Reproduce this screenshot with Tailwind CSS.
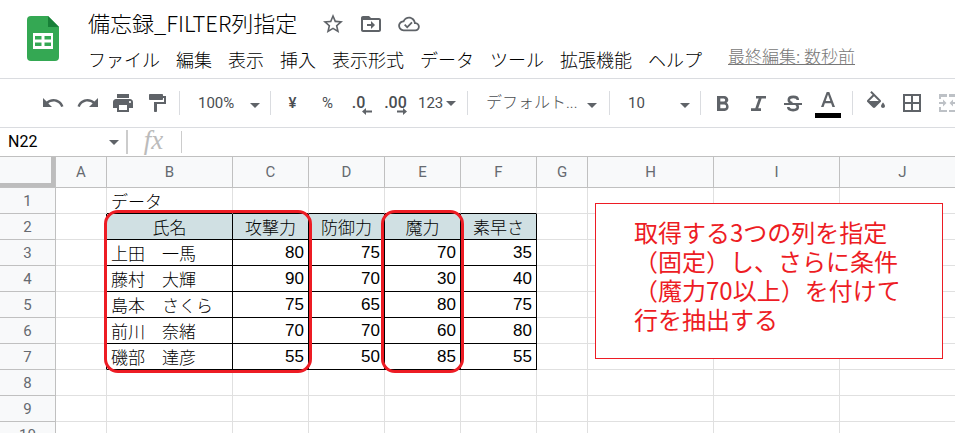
<!DOCTYPE html>
<html lang="ja">
<head>
<meta charset="utf-8">
<title>備忘録_FILTER列指定</title>
<script src="https://cdn.jsdelivr.net/npm/@tailwindcss/browser@4"></script>
</head>
<body class="flex h-screen flex-col overflow-hidden bg-white font-['Roboto','Noto_Sans_CJK_JP',sans-serif] text-black">
<header class="flex h-[79px] shrink-0 border-b border-[#dadce0] pl-[26px]">
  <svg class="mt-4 h-[45px] w-[34px] shrink-0" viewBox="0 0 34 45" aria-label="スプレッドシート"><path fill="#34a853" d="M5 0h17l11 11v30a4 4 0 0 1-4 4H5a4 4 0 0 1-4-4V4a4 4 0 0 1 4-4z"/><path fill="#188038" d="M22 0l11 11H22z"/><path fill="#fff" fill-rule="evenodd" d="M7 17h20v16H7zM9 20v3.500h6.500V20zM18.500 20v3.500H25V20zM9 26.500V30h6.500v-3.500zM18.500 26.500V30H25v-3.500z"/></svg>
  <div class="ml-7 flex flex-col pt-2">
    <div class="flex h-8 items-center">
      <h1 class="text-[22px] leading-7 pb-1 font-light font-['Noto_Sans_CJK_JP',sans-serif] whitespace-nowrap">備忘録_FILTER列指定</h1>
      <div class="ml-6 flex gap-[14px] text-[#5f6368]">
        <button aria-label="スター"><svg class="size-6" viewBox="0 0 24 24" fill="currentColor"><path d="M22 9.240l-7.190-.62L12 2 9.190 8.630 2 9.240l5.460 4.730L5.820 21 12 17.270 18.180 21l-1.630-7.030L22 9.240zM12 15.400l-3.760 2.270 1-4.280-3.320-2.880 4.380-.38L12 6.100l1.710 4.040 4.380.38-3.320 2.880 1 4.280L12 15.400z"/></svg></button>
        <button aria-label="移動"><svg class="size-6" viewBox="0 0 24 24" fill="currentColor"><path d="M20 6h-8l-2-2H4c-1.100 0-2 .9-2 2v12c0 1.100.9 2 2 2h16c1.100 0 2-.9 2-2V8c0-1.100-.9-2-2-2zm0 12H4V8h16v10zm-8-1l4-4-4-4v3H8v2h4z"/></svg></button>
        <button aria-label="保存済み"><svg class="size-6" viewBox="0 0 24 24" fill="currentColor"><path d="M19.350 10.040C18.670 6.590 15.640 4 12 4 9.110 4 6.600 5.640 5.350 8.040 2.340 8.360 0 10.910 0 14c0 3.310 2.690 6 6 6h13c2.760 0 5-2.240 5-5 0-2.640-2.050-4.780-4.650-4.960zM19 18H6c-2.210 0-4-1.790-4-4 0-2.050 1.530-3.760 3.560-3.970l1.070-.11.5-.95C8.080 7.140 9.940 6 12 6c2.620 0 4.880 1.860 5.390 4.430l.3 1.500 1.530.11c1.560.1 2.780 1.410 2.780 2.960 0 1.650-1.350 3-3 3zm-9-3.820l-2.090-2.090L6.500 13.500 10 17l6.010-6.010-1.410-1.410z" transform="translate(1.200 1.200) scale(.9)"/></svg></button>
      </div>
    </div>
    <nav class="flex h-10 items-center gap-4 text-[18px] font-light whitespace-nowrap font-['Noto_Sans_CJK_JP',sans-serif]">
      <button>ファイル</button><button>編集</button><button>表示</button><button>挿入</button><button>表示形式</button><button>データ</button><button>ツール</button><button>拡張機能</button><button>ヘルプ</button>
      <a href="#" class="mb-1.5 ml-2.5 text-[17px] text-[#777] underline">最終編集: 数秒前</a>
    </nav>
  </div>
</header>

<div class="flex h-[49px] shrink-0 items-center border-b border-[#dadce0] pl-[35px] text-[15px] text-[#4a4d51] *:shrink-0" role="toolbar">
  <button aria-label="元に戻す" class="flex w-[35px] justify-center"><svg class="size-6" viewBox="0 0 24 24" fill="#5f6368"><path d="M12.500 8c-2.650 0-5.050.99-6.900 2.600L2 7v9h9l-3.620-3.620c1.390-1.160 3.160-1.880 5.120-1.880 3.540 0 6.550 2.310 7.600 5.500l2.370-.78C21.080 11.030 17.150 8 12.500 8z"/></svg></button>
  <button aria-label="やり直し" class="flex w-[35px] justify-center"><svg class="size-6" viewBox="0 0 24 24" fill="#5f6368"><path d="M18.400 10.600C16.550 8.990 14.150 8 11.500 8c-4.650 0-8.580 3.030-9.960 7.220L3.900 16c1.050-3.190 4.050-5.500 7.600-5.500 1.950 0 3.730.72 5.120 1.880L13 16h9V7l-3.600 3.600z"/></svg></button>
  <button aria-label="印刷" class="flex w-[35px] justify-center"><svg class="size-6" viewBox="0 0 24 24" fill="#5f6368"><path d="M19 8H5c-1.660 0-3 1.340-3 3v6h4v4h12v-4h4v-6c0-1.660-1.340-3-3-3zm-3 11H8v-5h8v5zm3-7c-.55 0-1-.45-1-1s.45-1 1-1 1 .45 1 1-.45 1-1 1zM18 3H6v4h12V3z"/></svg></button>
  <button aria-label="書式を貼り付け" class="flex w-[35px] justify-center"><svg class="size-6" viewBox="0 0 24 24" fill="#5f6368"><path d="M18 4V3c0-.55-.45-1-1-1H5c-.55 0-1 .45-1 1v4c0 .55.45 1 1 1h12c.55 0 1-.45 1-1V6h1v4H9v9c0 .55.45 1 1 1h1c.55 0 1-.45 1-1v-7h9V4h-3z" transform="translate(-1 1)"/></svg></button>
  <div class="ml-1 h-6 w-px bg-[#dadce0]"></div>
  <div class="relative w-[90px]">
    <select aria-label="ズーム" class="w-full appearance-none bg-transparent pl-[18px]"><option>100%</option></select>
    <svg class="pointer-events-none absolute top-1/2 right-[10px] h-[5px] w-[10px]" viewBox="0 0 10 5" fill="#5f6368"><path d="M0 0h10L5 5z"/></svg>
  </div>
  <div class="h-6 w-px bg-[#dadce0]"></div>
  <button class="ml-1 w-[35px] font-medium">¥</button>
  <button class="w-[35px]">%</button>
  <button aria-label="小数点以下の桁数を減らす" class="relative w-[35px] pr-2 text-[16px] font-medium">.0<svg class="absolute right-2 bottom-0 h-[7px] w-[10px]" viewBox="0 0 10 7" fill="#5f6368"><path d="M0 3.500L4 0v2.500h6v2H4V7z"/></svg></button>
  <button aria-label="小数点以下の桁数を増やす" class="relative w-[35px] pr-1 text-[16px] font-medium">.00<svg class="absolute right-2 bottom-0 h-[7px] w-[10px]" viewBox="0 0 10 7" fill="#5f6368"><path d="M10 3.500L6 0v2.500H0v2h6V7z"/></svg></button>
  <button class="flex w-12 items-center gap-[3px] pl-[3px]">123<svg class="h-[5px] w-[10px]" viewBox="0 0 10 5" fill="#5f6368"><path d="M0 0h10L5 5z"/></svg></button>
  <div class="ml-1 h-6 w-px bg-[#dadce0]"></div>
  <div class="relative w-[141px]">
    <select aria-label="フォント" class="w-full appearance-none bg-transparent pl-[18px] text-[16px] font-light"><option>デフォルト...</option></select>
    <svg class="pointer-events-none absolute top-1/2 right-3 h-[5px] w-[10px]" viewBox="0 0 10 5" fill="#5f6368"><path d="M0 0h10L5 5z"/></svg>
  </div>
  <div class="h-6 w-px bg-[#dadce0]"></div>
  <div class="relative w-[90px]">
    <select aria-label="フォントサイズ" class="w-full appearance-none bg-transparent pl-[18px]"><option>10</option></select>
    <svg class="pointer-events-none absolute top-1/2 right-[10px] h-[5px] w-[10px]" viewBox="0 0 10 5" fill="#5f6368"><path d="M0 0h10L5 5z"/></svg>
  </div>
  <div class="h-6 w-px bg-[#dadce0]"></div>
  <button aria-label="太字" class="ml-1 flex w-[35px] justify-center"><svg class="size-6" viewBox="0 0 24 24" fill="#5f6368"><path d="M15.600 11.800c1-.7 1.700-1.800 1.700-2.800 0-2.300-1.800-4-4.100-4H6v15h7.800c2.100 0 3.800-1.700 3.800-3.900 0-1.900-.8-3.500-2-4.300zM9.300 7.600h3.400a1.500 1.500 0 0 1 0 3H9.300zm4 9.700h-4v-3.700h4a1.700 1.700 0 0 1 0 3.700z"/></svg></button>
  <button aria-label="斜体" class="flex w-[35px] justify-center"><svg class="size-6" viewBox="0 0 24 24" fill="#5f6368"><path d="M10 5v2.600h2.700L9.300 17.200H5V20h10v-2.800h-2.800l3.400-9.600H20V5z"/></svg></button>
  <button aria-label="取り消し線" class="flex w-[35px] justify-center"><svg class="size-6" viewBox="0 0 24 24" fill="none" stroke="#5f6368"><path stroke-width="2" d="M3 13h18"/><path stroke-width="2.600" d="M16.800 9c0-2-1.800-3.100-4.500-3.100S7.800 7.200 7.800 9c0 1.800 1.500 2.700 3.500 3.300M7.300 16c0 2 1.900 3.100 4.800 3.100 2.800 0 4.700-1.200 4.700-3.100 0-1.200-.6-2-1.600-2.600"/></svg></button>
  <button aria-label="テキストの色" class="flex w-[35px] justify-center"><svg class="h-[30px] w-[26px]" viewBox="0 0 26 30"><path fill="#5f6368" fill-rule="evenodd" d="M11.700 4h2.600L20 19h-2.600l-1.300-3.700H9.900L8.600 19H6zM10.700 13h4.600L13 6.600z"/><path d="M0 25h26v5H0z"/></svg></button>
  <div class="ml-[7px] h-6 w-px bg-[#dadce0]"></div>
  <button aria-label="塗りつぶしの色" class="ml-[5px] flex w-9 justify-center"><svg class="size-6" viewBox="0 0 24 24" fill="#5f6368"><path d="M16.560 8.940L7.620 0 6.210 1.410l2.380 2.380-5.150 5.150c-.59.59-.59 1.540 0 2.120l5.500 5.500c.29.290.68.440 1.060.44s.77-.15 1.060-.44l5.500-5.500c.59-.58.59-1.530 0-2.120zM5.210 10L10 5.210 14.790 10zM19 11.500s-2 2.170-2 3.500c0 1.100.9 2 2 2s2-.9 2-2c0-1.330-2-3.500-2-3.500z"/></svg></button>
  <button aria-label="枠線" class="flex w-9 justify-center"><svg class="size-6" viewBox="0 0 24 24" fill="#5f6368" fill-rule="evenodd"><path d="M3 3v18h18V3zm8 16H5v-6h6zm0-8H5V5h6zm8 8h-6v-6h6zm0-8h-6V5h6z"/></svg></button>
  <button aria-label="セルを結合" disabled class="flex w-9 justify-center"><svg class="size-6" viewBox="0 0 24 24" fill="#bdc1c6"><path d="M3 3h8v3H5v2H3zM13 3h8v5h-2V6h-6zM3 16h2v3h6v2H3zM19 16h2v5h-8v-2h6zM3 11h4V8.500l3.500 3.500L7 15.500V13H3zM21 11h-4V8.500L13.500 12l3.500 3.500V13h4z"/></svg></button>
</div>

<div class="flex h-[29px] shrink-0 items-center border-b border-[#c0c0c0]">
  <div class="flex w-[126px] items-center pl-2">
    <input aria-label="名前ボックス" value="N22" class="w-[101px] text-[16px] outline-none">
    <svg class="h-[5px] w-[10px]" viewBox="0 0 10 5" fill="#5f6368"><path d="M0 0h10L5 5z"/></svg>
  </div>
  <div class="h-6 w-0.5 bg-[#ccc]"></div>
  <label for="fx" class="w-[53px] pr-0.5 pb-1 text-center font-['Liberation_Serif',serif] text-[27px] leading-6 text-[#bbb] italic">fx</label>
  <input id="fx" class="h-[22px] min-w-0 flex-1 border-l border-[#ccc] pl-2 outline-none">
</div>

<main class="relative flex-1 overflow-hidden">
  <table class="w-[966px] table-fixed border-separate border-spacing-0 font-['Liberation_Sans','Noto_Sans_CJK_JP',sans-serif] text-[17px] leading-6 whitespace-nowrap [&_td]:h-[26px] [&_td]:border-r [&_td]:border-b [&_td]:border-[#e0e0e0] [&_td]:px-1 [&_td]:pt-px [&_td]:pb-0 [&_td]:font-['Noto_Sans_CJK_JP',sans-serif] [&_td]:font-light [&_th]:border-r [&_th]:border-b [&_th]:border-[#c0c0c0] [&_th]:bg-[#f8f9fa] [&_th]:p-0 [&_th]:font-['Roboto',sans-serif] [&_th]:text-[15px] [&_th]:leading-5 [&_th]:font-normal [&_th]:text-[#666a70] [&_td.k]:border-black [&_td.u]:border-b-black [&_td.s]:border-r-black [&_td.h]:bg-[#d0e0e3] [&_td.h]:text-center [&_td.n]:text-right [&_td.n]:font-['Liberation_Sans',sans-serif] [&_td.n]:font-normal">
    <colgroup><col class="w-14"><col class="w-[51px]"><col class="w-[126px]"><col class="w-[76px]"><col class="w-[76px]"><col class="w-[76px]"><col class="w-[76px]"><col class="w-[51px]"><col class="w-[126px]"><col class="w-[126px]"><col class="w-[126px]"></colgroup>
    <thead><tr class="h-[31px]"><th aria-label="すべて選択"><div class="h-[30px] border-r-4 border-b-4 border-[#bdbdbd]"></div></th><th scope="col">A</th><th scope="col">B</th><th scope="col">C</th><th scope="col">D</th><th scope="col">E</th><th scope="col">F</th><th scope="col">G</th><th scope="col">H</th><th scope="col">I</th><th scope="col">J</th></tr></thead>
    <tbody>
      <tr><th scope="row">1</th><td></td><td class="u">データ</td><td class="u"></td><td class="u"></td><td class="u"></td><td class="u"></td><td></td><td></td><td></td><td></td></tr>
      <tr><th scope="row">2</th><td class="s"></td><td class="k h">氏名</td><td class="k h">攻撃力</td><td class="k h">防御力</td><td class="k h">魔力</td><td class="k h">素早さ</td><td></td><td></td><td></td><td></td></tr>
      <tr><th scope="row">3</th><td class="s"></td><td class="k">上田　一馬</td><td class="k n">80</td><td class="k n">75</td><td class="k n">70</td><td class="k n">35</td><td></td><td></td><td></td><td></td></tr>
      <tr><th scope="row">4</th><td class="s"></td><td class="k">藤村　大輝</td><td class="k n">90</td><td class="k n">70</td><td class="k n">30</td><td class="k n">40</td><td></td><td></td><td></td><td></td></tr>
      <tr><th scope="row">5</th><td class="s"></td><td class="k">島本　さくら</td><td class="k n">75</td><td class="k n">65</td><td class="k n">80</td><td class="k n">75</td><td></td><td></td><td></td><td></td></tr>
      <tr><th scope="row">6</th><td class="s"></td><td class="k">前川　奈緒</td><td class="k n">70</td><td class="k n">70</td><td class="k n">60</td><td class="k n">80</td><td></td><td></td><td></td><td></td></tr>
      <tr><th scope="row">7</th><td class="s"></td><td class="k">磯部　達彦</td><td class="k n">55</td><td class="k n">50</td><td class="k n">85</td><td class="k n">55</td><td></td><td></td><td></td><td></td></tr>
      <tr><th scope="row">8</th><td></td><td></td><td></td><td></td><td></td><td></td><td></td><td></td><td></td><td></td></tr>
      <tr><th scope="row">9</th><td></td><td></td><td></td><td></td><td></td><td></td><td></td><td></td><td></td><td></td></tr>
      <tr><th scope="row">10</th><td></td><td></td><td></td><td></td><td></td><td></td><td></td><td></td><td></td><td></td></tr>
    </tbody>
  </table>
  <div class="pointer-events-none absolute top-[53px] left-[104px] h-[163px] w-[208px] rounded-[14px] border-3 border-[#ed1c24]"></div>
  <div class="pointer-events-none absolute top-[53px] left-[381px] h-[163px] w-[83px] rounded-[14px] border-3 border-[#ed1c24]"></div>
  <p class="absolute top-[46px] left-[595px] h-[156px] w-[348px] border border-[#ed1c24] bg-white pt-[13px] pl-[38px] font-['Noto_Sans_CJK_JP',sans-serif] text-[24px] leading-[29px] whitespace-nowrap text-[#ed1c24]">取得する3つの列を指定<br>（固定）し、さらに条件<br>（魔力70以上）を付けて<br>行を抽出する</p>
</main>
</body>
</html>
